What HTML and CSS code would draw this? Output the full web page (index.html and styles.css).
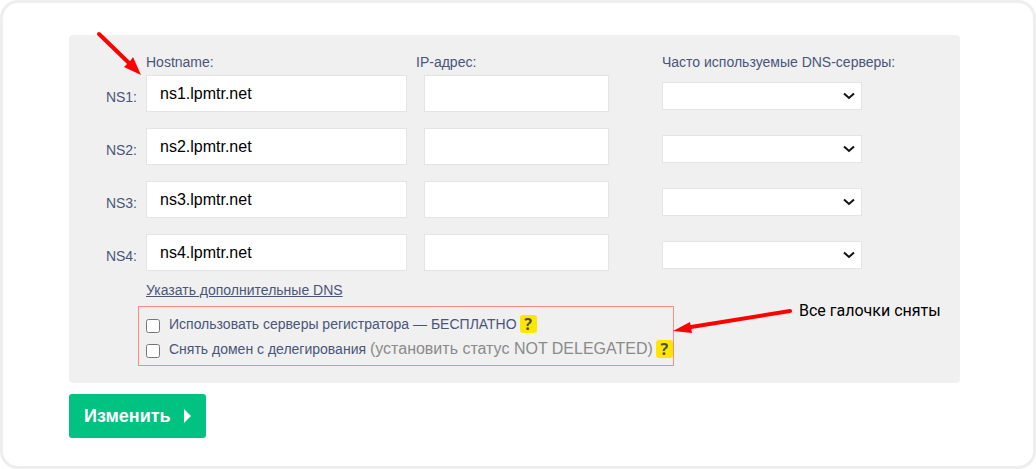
FILE: index.html
```html
<!DOCTYPE html>
<html lang="ru">
<head>
<meta charset="utf-8">
<meta name="viewport" content="width=device-width, initial-scale=1">
<title>DNS-серверы</title>
<link rel="stylesheet" href="styles.css">
</head>
<body>
<form class="card">
  <div class="panel">
    <div class="servers">
      <span class="head head-host">Hostname:</span>
      <span class="head">IP-адрес:</span>
      <span class="head head-pick">Часто используемые DNS-серверы:</span>

      <label class="name" for="ns1">NS1:</label>
      <input class="field" id="ns1" type="text" value="ns1.lpmtr.net">
      <input class="field field-ip" type="text" aria-label="IP-адрес NS1">
      <div class="pick"><select class="select" aria-label="DNS-сервер NS1"><option></option></select><svg class="chevron" viewBox="0 0 12 8"><path d="M1 1.500 6 6l5-4.500"/></svg></div>

      <label class="name" for="ns2">NS2:</label>
      <input class="field" id="ns2" type="text" value="ns2.lpmtr.net">
      <input class="field field-ip" type="text" aria-label="IP-адрес NS2">
      <div class="pick"><select class="select" aria-label="DNS-сервер NS2"><option></option></select><svg class="chevron" viewBox="0 0 12 8"><path d="M1 1.500 6 6l5-4.500"/></svg></div>

      <label class="name" for="ns3">NS3:</label>
      <input class="field" id="ns3" type="text" value="ns3.lpmtr.net">
      <input class="field field-ip" type="text" aria-label="IP-адрес NS3">
      <div class="pick"><select class="select" aria-label="DNS-сервер NS3"><option></option></select><svg class="chevron" viewBox="0 0 12 8"><path d="M1 1.500 6 6l5-4.500"/></svg></div>

      <label class="name" for="ns4">NS4:</label>
      <input class="field" id="ns4" type="text" value="ns4.lpmtr.net">
      <input class="field field-ip" type="text" aria-label="IP-адрес NS4">
      <div class="pick"><select class="select" aria-label="DNS-сервер NS4"><option></option></select><svg class="chevron" viewBox="0 0 12 8"><path d="M1 1.500 6 6l5-4.500"/></svg></div>
    </div>

    <a class="more" href="#">Указать дополнительные DNS</a>

    <div class="options">
      <div class="option">
        <input class="check" id="registrar" type="checkbox">
        <label for="registrar">Использовать серверы регистратора — БЕСПЛАТНО</label>
        <button class="help" type="button">?</button>
      </div>
      <div class="option">
        <input class="check" id="undelegate" type="checkbox">
        <label for="undelegate">Снять домен с делегирования <span class="note">(установить статус NOT DELEGATED)</span></label>
        <button class="help" type="button">?</button>
      </div>
      <div class="callout">
        <svg class="callout-arrow" viewBox="0 0 122 28" width="122" height="28"><path d="M117 5 18 21" stroke="#f00" stroke-width="4" stroke-linecap="round"/><path d="M0 25 17 16 19 27Z" fill="#f00"/></svg>
        <span>Все галочки сняты</span>
      </div>
    </div>
    <svg class="pointer" viewBox="0 0 48 46" width="48" height="46"><path d="M4 4 34 33" stroke="#f00" stroke-width="4" stroke-linecap="round"/><path d="M46 45 29 37 32 34 36 30 38 27Z" fill="#f00"/></svg>
  </div>

  <button class="submit" type="submit">Изменить <svg viewBox="0 0 7 14" width="7" height="14"><path d="M0 0 7 7 0 14Z" fill="#fff"/></svg></button>
</form>
</body>
</html>
```
FILE: styles.css
```css
* {
  box-sizing: border-box;
}

body {
  margin: 0;
  background: #fff;
  color: #4a5578;
  font: 14px/18px "Liberation Sans", Arial, sans-serif;
}

.card {
  padding: 32px 73px 28px 66px;
  border: 3px solid #eee;
  border-radius: 18px;
}

.panel {
  position: relative;
  padding: 18px 98px 17px 68px;
  border-radius: 4px;
  background: #f0f0f0;
}

.servers {
  display: grid;
  grid-template-columns: 0 minmax(0, 261fr) minmax(0, 193fr) minmax(0, 244fr);
  column-gap: 9px;
  row-gap: 16px;
}

.head {
  margin-bottom: -12px;
  white-space: nowrap;
}

.head-host {
  grid-column: 2;
}

.head-pick {
  margin-left: 44px;
}

.name {
  justify-self: end;
  align-self: center;
  padding-top: 6px;
}

.field {
  width: 100%;
  height: 37px;
  padding: 0 13px;
  border: 1px solid #e4e4e4;
  border-radius: 0;
  background: #fff;
  color: #000;
  font: 16px "Liberation Sans", Arial, sans-serif;
}

.field-ip {
  justify-self: end;
  width: calc(100% - 8px);
}

.pick {
  position: relative;
  align-self: end;
  margin: 0 0 2px 44px;
}

.select {
  display: block;
  width: 100%;
  height: 28px;
  border: 1px solid #e4e4e4;
  border-radius: 0;
  background: #fff;
  appearance: none;
}

.chevron {
  position: absolute;
  top: 10px;
  right: 7px;
  width: 12px;
  height: 8px;
  fill: none;
  stroke: #111;
  stroke-width: 2;
  pointer-events: none;
}

.more {
  display: block;
  width: fit-content;
  margin: 10px 0 7px 9px;
  color: #4a5578;
}

.options {
  position: relative;
  width: 536px;
  margin-left: 1px;
  padding: 4px 0 4px 7px;
  border: 1px solid #ff8a8a;
}

.option {
  display: flex;
  align-items: center;
  height: 25px;
  white-space: nowrap;
}

.check {
  flex: none;
  width: 14px;
  height: 14px;
  margin: 4px 9px 0 0;
}

.note {
  color: #8a8a8a;
  font-size: 16px;
}

.help {
  flex: none;
  width: 17px;
  height: 18px;
  margin-left: 3px;
  padding: 0;
  border: 0;
  border-radius: 3px;
  background: #ffe600;
  color: #4a5050;
  font: bold 16px/18px "Noto Sans", sans-serif;
}

.callout {
  position: absolute;
  top: -5px;
  left: 100%;
  display: flex;
  gap: 4px;
  color: #000;
  font: 16px/18px Roboto, sans-serif;
  white-space: nowrap;
}

.callout-arrow {
  margin-top: 4px;
  fill: none;
}

.pointer {
  position: absolute;
  top: -5px;
  left: 26px;
  fill: none;
}

.submit {
  display: flex;
  align-items: center;
  gap: 13px;
  height: 44px;
  margin-top: 11px;
  padding: 0 15px;
  border: 0;
  border-radius: 3px;
  background: #00c281;
  color: #fff;
  font: bold 18px "Liberation Sans", Arial, sans-serif;
}
```
